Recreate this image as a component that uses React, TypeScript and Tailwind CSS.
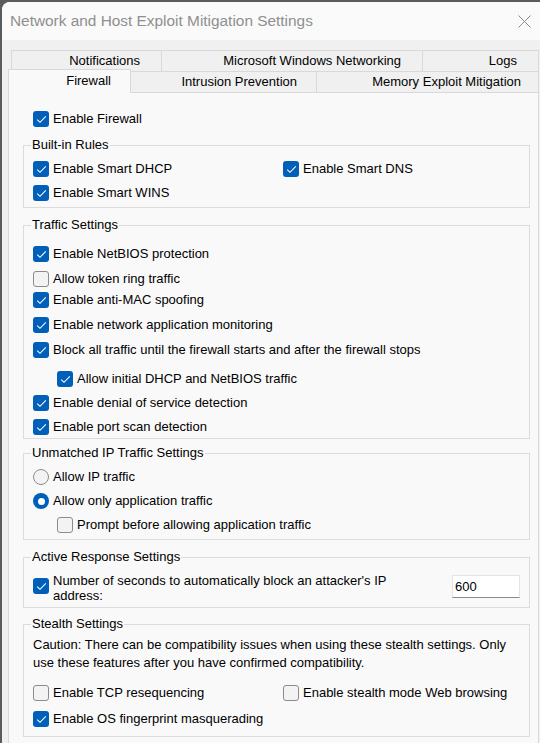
import React from 'react';

type RowProps = { checked?: boolean; label: string; className?: string };

const Box: React.FC<{ checked?: boolean }> = ({ checked }) =>
    checked ? (
        <span className="flex h-[16px] w-[16px] shrink-0 items-center justify-center rounded-[3px] bg-[#005fb8]">
            <svg width="11" height="9" viewBox="0 0 11 9">
                <path d="M1.2 4.6 L4 7.3 L9.8 1.4" fill="none" stroke="#ffffff" strokeWidth="1.1" />
            </svg>
        </span>
    ) : (
        <span className="h-[16px] w-[16px] shrink-0 rounded-[3px] border border-[#8b8b8b] bg-[#f3f3f3]" />
    );

const Radio: React.FC<{ checked?: boolean }> = ({ checked }) =>
    checked ? (
        <span className="flex h-[16px] w-[16px] shrink-0 items-center justify-center rounded-full bg-[#005fb8]">
            <span className="h-[7px] w-[7px] rounded-full bg-white" />
        </span>
    ) : (
        <span className="h-[16px] w-[16px] shrink-0 rounded-full border border-[#8b8b8b] bg-[#f3f3f3]" />
    );

const CheckRow: React.FC<RowProps> = ({ checked, label, className = '' }) => (
    <div className={`flex h-[16px] items-center gap-[4px] ${className}`}>
        <Box checked={checked} />
        <span className="whitespace-nowrap">{label}</span>
    </div>
);

const RadioRow: React.FC<RowProps> = ({ checked, label, className = '' }) => (
    <div className={`flex h-[16px] items-center gap-[4px] ${className}`}>
        <Radio checked={checked} />
        <span className="whitespace-nowrap">{label}</span>
    </div>
);

const Group: React.FC<{ title: string; className?: string; children: React.ReactNode }> = ({ title, className = '', children }) => (
    <fieldset className={`border border-[#dcdcdc] px-[9px] ${className}`}>
        <legend className="ml-[-2px] px-[1px] leading-[16px]">{title}</legend>
        {children}
    </fieldset>
);

const tabsTop = [
    { label: 'Notifications', w: 'w-[151px] border-l' },
    { label: 'Microsoft Windows Networking', w: 'w-[261px]' },
    { label: 'Logs', w: 'w-[116px]' },
];

const App: React.FC = () => {
    return (
        <div className="h-[743px] w-[540px] overflow-hidden bg-[#5b5b5b] pl-[2px] pt-[2px] font-['Liberation_Sans',Arial,sans-serif] text-[13px] text-black">
            <div className="flex h-[741px] w-[538px] flex-col overflow-hidden rounded-tl-[8px] bg-[#f0f0f0]">
                {/* title bar */}
                <div className="flex h-[38px] shrink-0 items-center justify-between bg-[#fafafa] pl-[8px] pr-[9px]">
                    <span className="text-[15.4px] text-[#8f8f8f]">Network and Host Exploit Mitigation Settings</span>
                    <svg width="13" height="13" viewBox="0 0 13 13" className="mt-[1px]">
                        <path d="M0.5 0.5 L12.5 12.5 M12.5 0.5 L0.5 12.5" stroke="#8a8a8a" strokeWidth="1" />
                    </svg>
                </div>

                <div className="pl-[6px] pt-[10px]">
                    {/* tab rows */}
                    <div className="ml-[3px] flex h-[21px]">
                        {tabsTop.map(t => (
                            <div
                                key={t.label}
                                className={`flex h-[21px] items-center justify-end border-r border-t border-[#d9d9d9] pr-[21px] ${t.w}`}
                            >
                                {t.label}
                            </div>
                        ))}
                    </div>
                    <div className="flex h-[21px] items-start">
                        <div className="relative z-10 -mt-[2px] flex h-[24px] w-[123px] items-start justify-end border-l border-r border-t border-[#d9d9d9] bg-[#f9f9f9] pr-[19px] pt-[1px]">
                            Firewall
                        </div>
                        <div className="flex h-[21px] w-[186px] items-center justify-end border-r border-t border-[#d9d9d9] pr-[19px]">
                            Intrusion Prevention
                        </div>
                        <div className="flex h-[21px] w-[222px] items-center justify-end border-r border-t border-[#d9d9d9] pr-[17px]">
                            Memory Exploit Mitigation
                        </div>
                    </div>

                    {/* tab page */}
                    <div className="h-[700px] w-[531px] border border-[#d9d9d9] bg-[#f9f9f9] pl-[14px] pr-[8px] pt-[18px]">
                        <CheckRow checked label="Enable Firewall" className="ml-[10px]" />

                        <Group title="Built-in Rules" className="mt-[10px] pb-[6px]">
                            <div className="mt-[8px] grid grid-cols-[250px_1fr] gap-y-[8px]">
                                <CheckRow checked label="Enable Smart DHCP" />
                                <CheckRow checked label="Enable Smart DNS" />
                                <CheckRow checked label="Enable Smart WINS" />
                            </div>
                        </Group>

                        <Group title="Traffic Settings" className="mt-[9px] pb-[3px]">
                            <CheckRow checked label="Enable NetBIOS protection" className="mt-[13px]" />
                            <CheckRow label="Allow token ring traffic" className="mt-[9px]" />
                            <CheckRow checked label="Enable anti-MAC spoofing" className="mt-[5px]" />
                            <CheckRow checked label="Enable network application monitoring" className="mt-[9px]" />
                            <CheckRow
                                checked
                                label="Block all traffic until the firewall starts and after the firewall stops"
                                className="mt-[9px]"
                            />
                            <CheckRow checked label="Allow initial DHCP and NetBIOS traffic" className="ml-[24px] mt-[13px]" />
                            <CheckRow checked label="Enable denial of service detection" className="mt-[8px]" />
                            <CheckRow checked label="Enable port scan detection" className="mt-[8px]" />
                        </Group>

                        <Group title="Unmatched IP Traffic Settings" className="mt-[6px] pb-[6px]">
                            <RadioRow label="Allow IP traffic" className="mt-[8px]" />
                            <RadioRow checked label="Allow only application traffic" className="mt-[8px]" />
                            <CheckRow label="Prompt before allowing application traffic" className="ml-[24px] mt-[8px]" />
                        </Group>

                        <Group title="Active Response Settings" className="mt-[9px] pb-[4px]">
                            <div className="mt-[8px] flex items-start">
                                <div className="mt-[5px]">
                                    <Box checked />
                                </div>
                                <div className="ml-[4px] flex-1 leading-[15px]">
                                    Number of seconds to automatically block an attacker's IP
                                    <br />
                                    address:
                                </div>
                                <div className="mt-[2px] flex h-[23px] w-[68px] items-center border border-b-[#8a8a8a] border-[#e3e3e3] bg-white pl-[2px] pt-[1px]">
                                    600
                                </div>
                            </div>
                        </Group>

                        <Group title="Stealth Settings" className="mt-[8px] pb-[9px]">
                            <p className="mt-[4px] whitespace-nowrap leading-[18px]">
                                Caution: There can be compatibility issues when using these stealth settings. Only
                                <br />
                                use these features after you have confirmed compatibility.
                            </p>
                            <div className="mt-[13px] grid grid-cols-[250px_1fr] gap-y-[10px]">
                                <CheckRow label="Enable TCP resequencing" />
                                <CheckRow label="Enable stealth mode Web browsing" />
                                <CheckRow checked label="Enable OS fingerprint masquerading" />
                            </div>
                        </Group>
                    </div>
                </div>
            </div>
        </div>
    );
};

export default App;
